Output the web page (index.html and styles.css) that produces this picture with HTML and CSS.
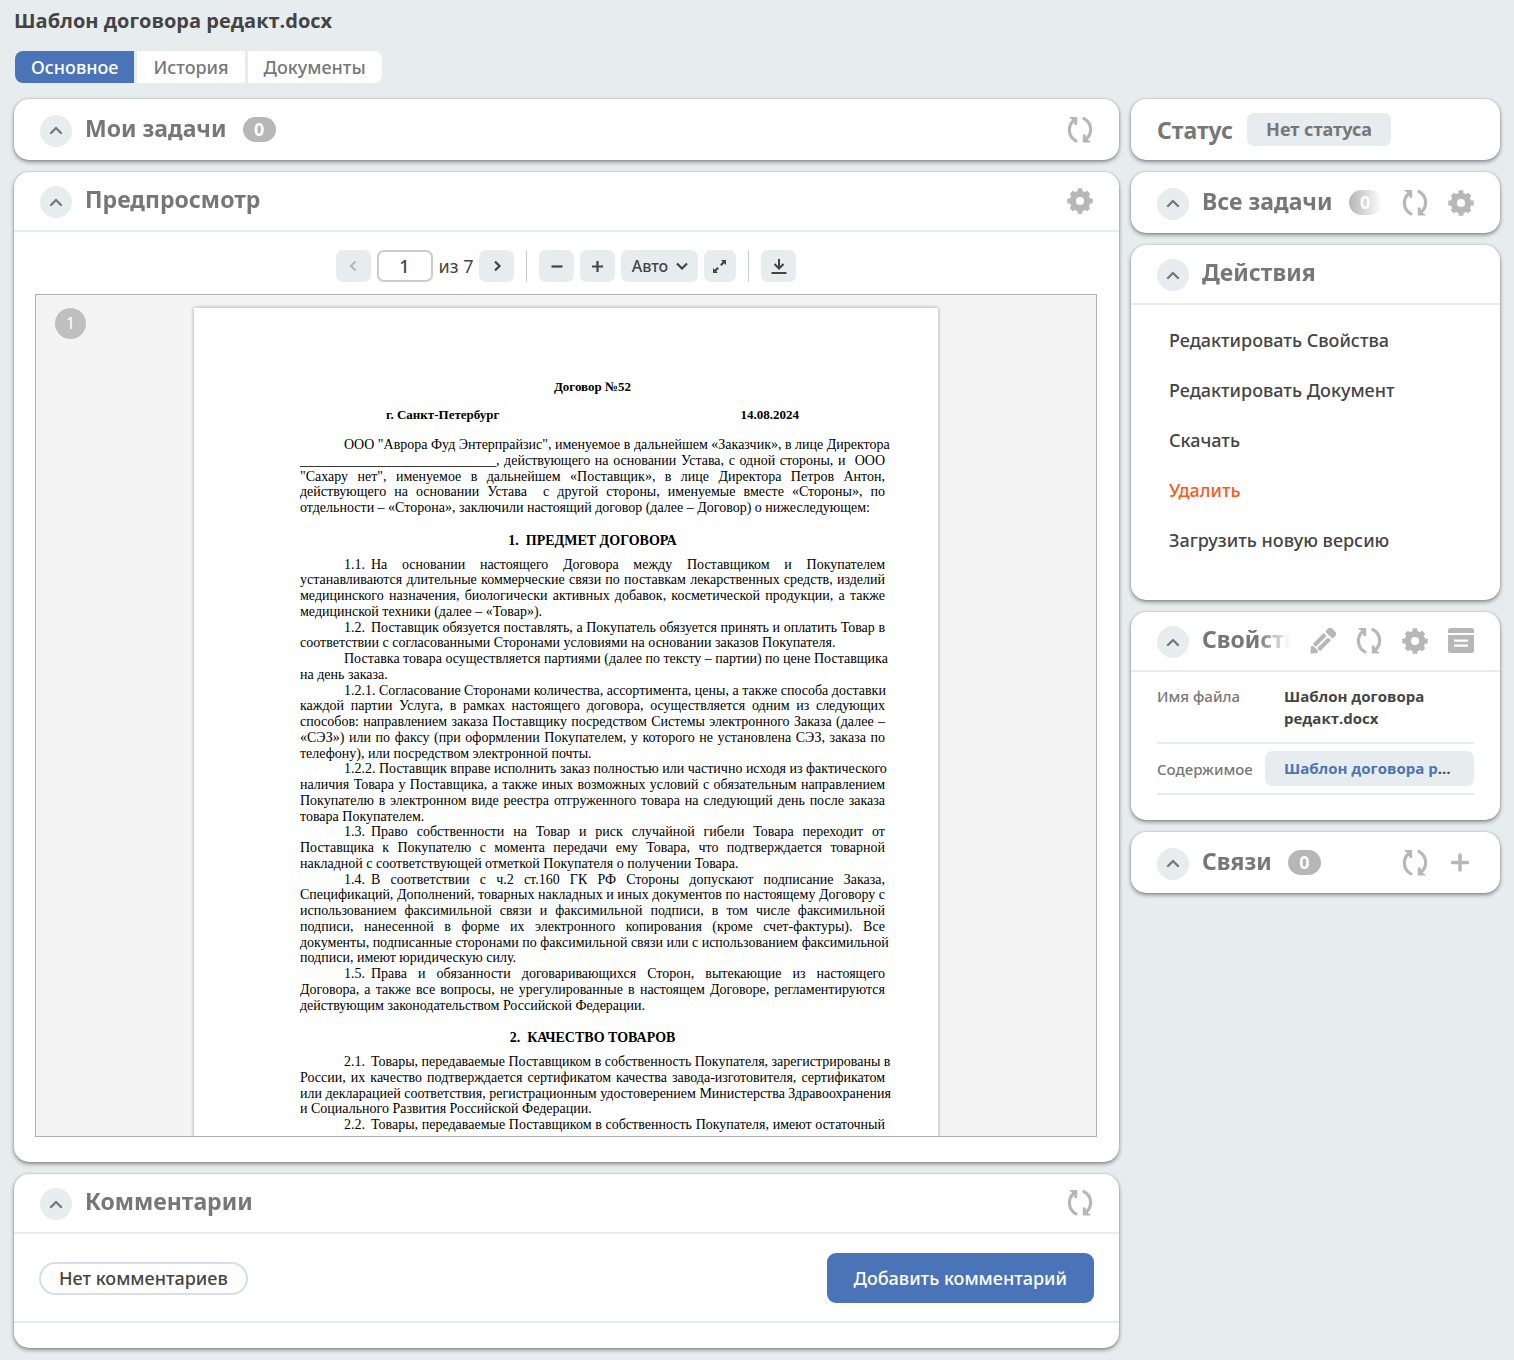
FILE: index.html
```html
<!DOCTYPE html>
<html lang="ru">
<head>
<meta charset="utf-8">
<meta name="viewport" content="width=device-width, initial-scale=1">
<title>Шаблон договора редакт.docx</title>
<link rel="stylesheet" href="styles.css">
</head>
<body>
<svg class="sprite" aria-hidden="true">
  <symbol id="i-up" viewBox="0 0 14 9"><path d="M2 7l5-5 5 5" fill="none" stroke="currentColor" stroke-width="2.4" stroke-linecap="round" stroke-linejoin="round"/></symbol>
  <symbol id="i-refresh" viewBox="0 0 26 26">
    <g id="half"><path d="M9 23.8A12.4 12.4 0 0 1 7 3.2" fill="none" stroke="currentColor" stroke-width="3.2" stroke-linecap="round"/><path d="M2.6 0H10.200V7.6Q8.800 8.6 7.400 7.600L7 5.200 4.500 2Q2 1.600 2.600 0Z" fill="currentColor"/></g>
    <use href="#half" transform="rotate(180 13 12.700)"/>
  </symbol>
  <symbol id="i-gear" viewBox="0 0 26 26">
    <circle cx="13" cy="13" r="7.200" fill="none" stroke="currentColor" stroke-width="6.200"/>
    <g fill="none" stroke="currentColor" stroke-width="4.800" stroke-linecap="butt">
      <path d="M13 .3v4M13 21.700v4M.3 13h4M21.700 13h4"/>
      <path d="M4.300 4.300l3 3M18.700 18.700l3 3M21.700 4.300l-3 3M7.300 18.700l-3 3"/>
    </g>
  </symbol>
  <symbol id="i-pencil" viewBox="0 0 26 26">
    <g transform="translate(.4 25.600) rotate(-45)" fill="currentColor">
      <path d="M0 0L5.500-4.800Q7.500-4 7.500-2V2Q7.500 4 5.500 4.800Z"/>
      <rect x="8.500" y="-5.200" width="15.500" height="4.200" rx="1"/>
      <rect x="8.500" y="1" width="15.500" height="4.200" rx="1"/>
      <rect x="26" y="-5.200" width="7" height="10.400" rx="1.800"/>
    </g>
  </symbol>
  <symbol id="i-form" viewBox="0 0 26 26">
    <path d="M2.500 0h21Q26 0 26 2.500V5H0V2.500Q0 0 2.500 0Z" fill="currentColor"/>
    <path d="M0 7h26v15.500q0 2.500-2.500 2.500h-21Q0 25 0 22.500ZM6 11.500v2.200h14v-2.200ZM6 16.500v2.200h14v-2.200Z" fill="currentColor" fill-rule="evenodd"/>
  </symbol>
  <symbol id="i-add" viewBox="0 0 26 26"><path d="M12 5v15M4.500 12.500h15" fill="none" stroke="currentColor" stroke-width="3.600" stroke-linecap="round"/></symbol>
  <symbol id="i-tool-prev" viewBox="0 0 16 16"><path d="M10.500 3.500L6 8l4.500 4.500" fill="none" stroke="currentColor" stroke-width="2.200"/></symbol>
  <symbol id="i-tool-next" viewBox="0 0 16 16"><path d="M6 3.500L10.500 8 6 12.500" fill="none" stroke="currentColor" stroke-width="2.200"/></symbol>
  <symbol id="i-tool-down" viewBox="0 0 12 8"><path d="M1 1.500l5 5 5-5" fill="none" stroke="currentColor" stroke-width="2.200"/></symbol>
  <symbol id="i-tool-minus" viewBox="0 0 16 16"><path d="M2.500 8.500h11" fill="none" stroke="currentColor" stroke-width="2.200"/></symbol>
  <symbol id="i-tool-plus" viewBox="0 0 16 16"><path d="M2 8.500h11M7.500 3v11" fill="none" stroke="currentColor" stroke-width="2.200"/></symbol>
  <symbol id="i-tool-expand" viewBox="0 0 16 16"><path d="M9 2h5v5zM1 10v5h5z" fill="currentColor"/><path d="M8.800 7.200l3-3M6.200 9.800l-3 3" stroke="currentColor" stroke-width="2.200"/></symbol>
  <symbol id="i-tool-save" viewBox="0 0 16 16"><path d="M8 1v9M3.500 6L8 10.500 12.500 6" fill="none" stroke="currentColor" stroke-width="2"/><path d="M.5 15h15" stroke="currentColor" stroke-width="2"/></symbol>
</svg>

<header class="top">
  <h1 class="page-title">Шаблон договора редакт.docx</h1>
  <nav class="tabs" aria-label="Разделы">
    <button type="button" class="tab tab-active">Основное</button>
    <button type="button" class="tab">История</button>
    <button type="button" class="tab">Документы</button>
  </nav>
</header>

<div class="layout">
  <main class="column">
    <section class="card">
      <header class="card-head">
        <button type="button" class="toggle" aria-label="Свернуть"><svg><use href="#i-up"/></svg></button>
        <div class="heading"><h2>Мои задачи</h2><span class="count">0</span></div>
        <button type="button" class="icon-btn" aria-label="Обновить"><svg><use href="#i-refresh"/></svg></button>
      </header>
    </section>

    <section class="card">
      <header class="card-head ruled">
        <button type="button" class="toggle" aria-label="Свернуть"><svg><use href="#i-up"/></svg></button>
        <div class="heading"><h2>Предпросмотр</h2></div>
        <button type="button" class="icon-btn" aria-label="Настройки"><svg><use href="#i-gear"/></svg></button>
      </header>
      <div class="preview">
        <div class="toolbar">
          <button type="button" class="tool" aria-label="Назад" disabled><svg><use href="#i-tool-prev"/></svg></button>
          <input class="page-input" type="text" value="1" id="page-no" aria-label="Страница">
          <label class="page-total" for="page-no">из 7</label>
          <button type="button" class="tool" aria-label="Вперёд"><svg><use href="#i-tool-next"/></svg></button>
          <span class="divider"></span>
          <button type="button" class="tool" aria-label="Уменьшить"><svg><use href="#i-tool-minus"/></svg></button>
          <button type="button" class="tool" aria-label="Увеличить"><svg><use href="#i-tool-plus"/></svg></button>
          <button type="button" class="tool tool-zoom">Авто <svg><use href="#i-tool-down"/></svg></button>
          <button type="button" class="tool tool-small" aria-label="Во весь экран"><svg><use href="#i-tool-expand"/></svg></button>
          <span class="divider"></span>
          <button type="button" class="tool" aria-label="Скачать"><svg><use href="#i-tool-save"/></svg></button>
        </div>
        <div class="viewer">
          <span class="page-badge">1</span>
          <article class="sheet">
            <h3 class="doc-title">Договор №52</h3>
            <div class="doc-meta"><span>г. Санкт-Петербург</span><span>14.08.2024</span></div>
            <p>ООО "Аврора Фуд Энтерпрайзис", именуемое в дальнейшем «Заказчик», в лице Директора<br>____________________________, действующего на основании Устава, с одной стороны, и&nbsp; ООО<br>"Сахару нет", именуемое в дальнейшем «Поставщик», в лице Директора Петров Антон,<br>действующего на основании Устава&nbsp; с другой стороны, именуемые вместе «Стороны», по<span class="end">отдельности – «Сторона», заключили настоящий договор (далее – Договор) о нижеследующем:</span></p>
            <h4>1.&nbsp; ПРЕДМЕТ ДОГОВОРА</h4>
            <p><span class="num">1.1.</span>На основании настоящего Договора между Поставщиком и Покупателем<br>устанавливаются длительные коммерческие связи по поставкам лекарственных средств, изделий<br>медицинского назначения, биологически активных добавок, косметической продукции, а также<span class="end">медицинской техники (далее – «Товар»).</span></p>
            <p><span class="num">1.2.</span>Поставщик обязуется поставлять, а Покупатель обязуется принять и оплатить Товар в<span class="end">соответствии с согласованными Сторонами условиями на основании заказов Покупателя.</span></p>
            <p>Поставка товара осуществляется партиями (далее по тексту – партии) по цене Поставщика<span class="end">на день заказа.</span></p>
            <p><span class="num">1.2.1.&nbsp;</span>Согласование Сторонами количества, ассортимента, цены, а также способа доставки<br>каждой партии Услуга, в рамках настоящего договора, осуществляется одним из следующих<br>способов: направлением заказа Поставщику посредством Системы электронного Заказа (далее –<br>«СЭЗ») или по факсу (при оформлении Покупателем, у которого не установлена СЭЗ, заказа по<span class="end">телефону), или посредством электронной почты.</span></p>
            <p><span class="num">1.2.2.&nbsp;</span>Поставщик вправе исполнить заказ полностью или частично исходя из фактического<br>наличия Товара у Поставщика, а также иных возможных условий с обязательным направлением<br>Покупателю в электронном виде реестра отгруженного товара на следующий день после заказа<span class="end">товара Покупателем.</span></p>
            <p><span class="num">1.3.</span>Право собственности на Товар и риск случайной гибели Товара переходит от<br>Поставщика к Покупателю с момента передачи ему Товара, что подтверждается товарной<span class="end">накладной с соответствующей отметкой Покупателя о получении Товара.</span></p>
            <p><span class="num">1.4.</span>В соответствии с ч.2 ст.160 ГК РФ Стороны допускают подписание Заказа,<br>Спецификаций, Дополнений, товарных накладных и иных документов по настоящему Договору с<br>использованием факсимильной связи и факсимильной подписи, в том числе факсимильной<br>подписи, нанесенной в форме их электронного копирования (кроме счет-фактуры). Все<br>документы, подписанные сторонами по факсимильной связи или с использованием факсимильной<span class="end">подписи, имеют юридическую силу.</span></p>
            <p><span class="num">1.5.</span>Права и обязанности договаривающихся Сторон, вытекающие из настоящего<br>Договора, а также все вопросы, не урегулированные в настоящем Договоре, регламентируются<span class="end">действующим законодательством Российской Федерации.</span></p>
            <h4>2.&nbsp; КАЧЕСТВО ТОВАРОВ</h4>
            <p><span class="num">2.1.</span>Товары, передаваемые Поставщиком в собственность Покупателя, зарегистрированы в<br>России, их качество подтверждается сертификатом качества завода-изготовителя, сертификатом<br>или декларацией соответствия, регистрационным удостоверением Министерства Здравоохранения<span class="end">и Социального Развития Российской Федерации.</span></p>
            <p><span class="num">2.2.</span>Товары, передаваемые Поставщиком в собственность Покупателя, имеют остаточный</p>
          </article>
        </div>
      </div>
    </section>

    <section class="card">
      <header class="card-head ruled">
        <button type="button" class="toggle" aria-label="Свернуть"><svg><use href="#i-up"/></svg></button>
        <div class="heading"><h2>Комментарии</h2></div>
        <button type="button" class="icon-btn" aria-label="Обновить"><svg><use href="#i-refresh"/></svg></button>
      </header>
      <div class="comments">
        <span class="empty">Нет комментариев</span>
        <button type="button" class="primary">Добавить комментарий</button>
      </div>
    </section>
  </main>

  <aside class="column">
    <section class="card status">
      <h2>Статус</h2>
      <span class="status-value">Нет статуса</span>
    </section>

    <section class="card">
      <header class="card-head">
        <button type="button" class="toggle" aria-label="Свернуть"><svg><use href="#i-up"/></svg></button>
        <div class="heading"><h2>Все задачи</h2><span class="count">0</span></div>
        <button type="button" class="icon-btn" aria-label="Обновить"><svg><use href="#i-refresh"/></svg></button>
        <button type="button" class="icon-btn" aria-label="Настройки"><svg><use href="#i-gear"/></svg></button>
      </header>
    </section>

    <section class="card">
      <header class="card-head ruled">
        <button type="button" class="toggle" aria-label="Свернуть"><svg><use href="#i-up"/></svg></button>
        <div class="heading"><h2>Действия</h2></div>
      </header>
      <ul class="actions">
        <li><a href="#">Редактировать Свойства</a></li>
        <li><a href="#">Редактировать Документ</a></li>
        <li><a href="#">Скачать</a></li>
        <li><a href="#" class="danger">Удалить</a></li>
        <li><a href="#">Загрузить новую версию</a></li>
      </ul>
    </section>

    <section class="card">
      <header class="card-head ruled">
        <button type="button" class="toggle" aria-label="Свернуть"><svg><use href="#i-up"/></svg></button>
        <div class="heading"><h2>Свойства</h2></div>
        <button type="button" class="icon-btn" aria-label="Редактировать"><svg><use href="#i-pencil"/></svg></button>
        <button type="button" class="icon-btn" aria-label="Обновить"><svg><use href="#i-refresh"/></svg></button>
        <button type="button" class="icon-btn" aria-label="Настройки"><svg><use href="#i-gear"/></svg></button>
        <button type="button" class="icon-btn" aria-label="Форма"><svg><use href="#i-form"/></svg></button>
      </header>
      <dl class="props">
        <div class="prop">
          <dt>Имя файла</dt>
          <dd>Шаблон договора редакт.docx</dd>
        </div>
        <div class="prop prop-linked">
          <dt>Содержимое</dt>
          <dd class="chip"><a href="#">Шаблон договора редакт.docx</a></dd>
        </div>
      </dl>
    </section>

    <section class="card">
      <header class="card-head">
        <button type="button" class="toggle" aria-label="Свернуть"><svg><use href="#i-up"/></svg></button>
        <div class="heading"><h2>Связи</h2><span class="count">0</span></div>
        <button type="button" class="icon-btn" aria-label="Обновить"><svg><use href="#i-refresh"/></svg></button>
        <button type="button" class="icon-btn" aria-label="Добавить"><svg><use href="#i-add"/></svg></button>
      </header>
    </section>
  </aside>
</div>
</body>
</html>
```
FILE: styles.css
```css
* { box-sizing: border-box; }

body {
  margin: 0;
  padding: 8px 14px 12px;
  background: #e7edef;
  color: #444;
  font: 500 18px/24px "Noto Sans", "Open Sans", sans-serif;
}

button, input { font: inherit; color: inherit; }
button { border: 0; padding: 0; background: none; cursor: pointer; }
h1, h2, h3, h4, p, ul, dl, dd { margin: 0; padding: 0; }
a { color: inherit; text-decoration: none; }
svg { display: block; }
.sprite { display: none; }

h1, .prop dd { font-family: "Open Sans", "Noto Sans", sans-serif; font-weight: 700; }

.page-title { font-size: 20px; line-height: 26px; }

.tabs { display: flex; gap: 3px; margin: 17px 1px 16px; }
.tab { height: 32px; padding: 0 16px; background: #fff; color: #777; }
.tab:first-child { border-radius: 8px 0 0 8px; }
.tab:last-child { border-radius: 0 8px 8px 0; }
.tab-active { background: #4b74b8; color: #fff; }

.layout { display: grid; grid-template-columns: minmax(0, 1fr) 369px; gap: 12px; align-items: start; }
.column { display: flex; flex-direction: column; gap: 12px; min-width: 0; }

.card {
  background: #fff;
  border-radius: 15px;
  box-shadow: 0 2px 4px rgba(0, 0, 0, .42), 0 0 2px rgba(0, 0, 0, .2);
}
.card-head { display: flex; align-items: center; gap: 20px; height: 61px; padding: 2px 26px 0; }
.ruled { height: 60px; border-bottom: 2px solid #e7edef; }

h2 { color: #777; font-size: 23px; font-weight: 700; line-height: 30px; white-space: nowrap; }
.heading {
  display: flex;
  flex: 1;
  align-items: center;
  gap: 16px;
  min-width: 0;
  margin-left: -7px;
  padding-bottom: 6px;
  overflow: hidden;
  -webkit-mask-image: linear-gradient(to left, transparent, #000 32px);
  mask-image: linear-gradient(to left, transparent, #000 32px);
}
.count {
  flex: none;
  width: 33px;
  height: 25px;
  margin-top: 4px;
  border-radius: 13px;
  background: #b7b7b7;
  color: #fff;
  font-weight: 700;
  line-height: 25px;
  text-align: center;
}

.toggle {
  display: grid;
  flex: none;
  place-items: center;
  width: 32px;
  height: 32px;
  border-radius: 50%;
  background: #e7edef;
  color: #777;
}
.toggle svg { width: 14px; height: 9px; }
.icon-btn { flex: none; margin-bottom: 2px; color: #b7b7b7; }
.icon-btn svg { width: 26px; height: 26px; }

.preview { padding: 18px 22px 25px 21px; }
.toolbar { display: flex; justify-content: center; align-items: center; gap: 6px; margin-bottom: 12px; }
.tool {
  display: flex;
  justify-content: center;
  align-items: center;
  gap: 8px;
  width: 35px;
  height: 32px;
  border-radius: 7px;
  background: #e7edef;
  color: #444;
}
.tool svg { width: 16px; height: 16px; }
.tool:disabled { color: #b7b7b7; }
.tool-small { width: 32px; }
.tool-zoom { width: 77px; font-size: 16px; }
.tool-zoom svg { width: 12px; height: 8px; }
.page-input {
  width: 56px;
  height: 32px;
  border: 2px solid #ccc;
  border-radius: 7px;
  background: #fff;
  text-align: center;
}
.page-total { font-weight: 400; }
.divider { width: 1px; height: 32px; margin: 0 6px; background: #c8ced2; }

.viewer {
  position: relative;
  height: 843px;
  padding: 13px 0;
  overflow: hidden;
  border: 1px solid #b0b0b0;
  background: #f4f4f4;
}
.page-badge {
  position: absolute;
  top: 13px;
  left: 19px;
  width: 31px;
  height: 31px;
  border-radius: 50%;
  background: #bfbfbf;
  color: #fff;
  font-size: 16px;
  font-weight: 400;
  line-height: 31px;
  text-align: center;
}
.sheet {
  width: 744px;
  margin: 0 auto;
  padding: 71px 53px 53px 106px;
  background: #fff;
  box-shadow: 0 0 4px rgba(0, 0, 0, .35);
  color: #000;
  font: 400 14px/1.125 "Liberation Serif", serif;
  white-space: nowrap;
}
.sheet p { text-align: justify; text-align-last: justify; text-indent: 44px; }
.end { display: block; text-align-last: left; text-indent: 0; }
.num { display: inline-block; min-width: 27px; text-indent: 0; text-align-last: left; }
.doc-title { font-size: 13px; line-height: 16px; text-align: center; }
.doc-meta {
  display: flex;
  justify-content: space-between;
  margin: 12px 0 14px;
  padding: 0 86px;
  font-size: 13px;
  font-weight: 700;
  line-height: 16px;
}
.sheet h4 { margin: 17px 0 8px; font-size: 14px; text-align: center; }

.comments {
  display: flex;
  justify-content: space-between;
  align-items: center;
  margin-bottom: 25px;
  padding: 19px 25px 18px;
  border-bottom: 2px solid #e7edef;
}
.empty { padding: 2px 18px; border: 2px solid #d8dee2; border-radius: 17px; line-height: 25px; }
.primary { height: 50px; padding: 0 27px; border-radius: 9px; background: #4b74b8; color: #fff; }

.status { display: flex; align-items: center; gap: 14px; height: 61px; padding: 0 26px; }
.status-value { padding: 0 19px; border-radius: 7px; background: #e7edef; color: #777; font-weight: 700; line-height: 33px; }

.actions { padding: 10px 38px 35px; list-style: none; }
.actions a { display: block; line-height: 50px; }
.danger { color: #ff5722; }

.props { padding: 0 26px 25px; font-size: 15px; line-height: 22px; }
.prop { display: grid; grid-template-columns: 108px minmax(0, 1fr); padding: 13px 0; border-bottom: 2px solid #e7edef; }
.prop dt { color: #777; }
.prop dd { padding: 0 19px; }
.prop-linked { align-items: center; padding: 7px 0; }
.chip { overflow: hidden; border-radius: 7px; background: #e7edef; line-height: 35px; text-overflow: ellipsis; white-space: nowrap; }
.chip a { color: #4b74b8; }
```
